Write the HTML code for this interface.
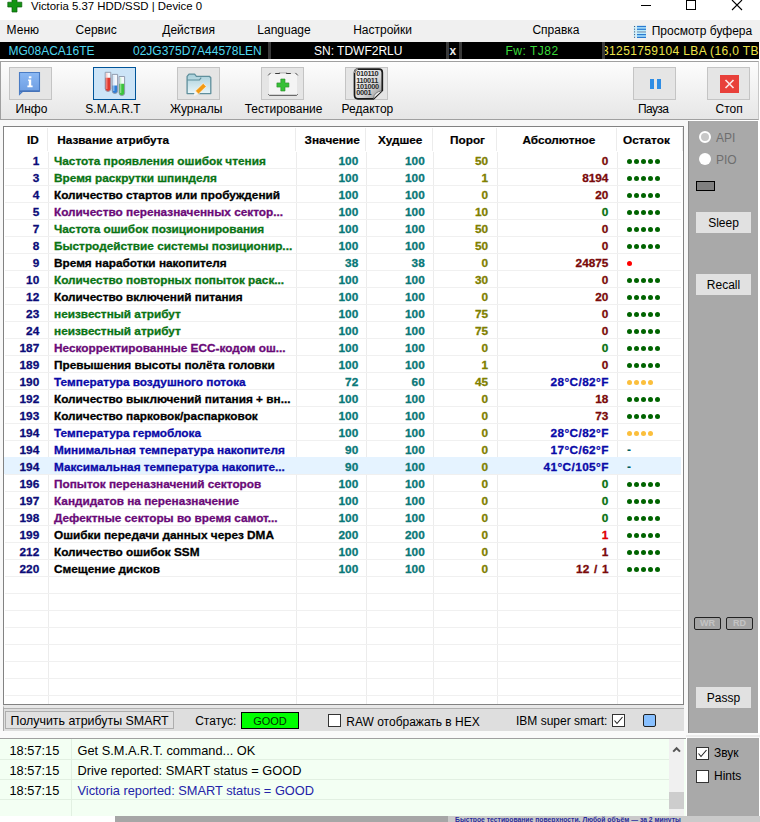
<!DOCTYPE html>
<html><head><meta charset="utf-8">
<style>
*{margin:0;padding:0;box-sizing:border-box}
html,body{width:760px;height:822px;overflow:hidden;background:#fff;font-family:"Liberation Sans",sans-serif;font-size:12px;color:#000;position:relative}
.a{position:absolute}
.t{position:absolute;white-space:nowrap;line-height:14px}
/* title */
#title{left:0;top:0;width:760px;height:20px;background:#fff}
/* menu */
#menu{left:0;top:20px;width:760px;height:22px;background:#f0f0f0}
#menu .t{top:3px}
/* black bar */
#bbar{left:0;top:42px;width:759px;height:17px;background:#000}
#bbar .t{top:2px;font-size:12px}
.sep{position:absolute;top:0;width:3px;height:17px;background:#3a3a3a}
/* toolbar */
#tbar{left:0;top:61px;width:759px;height:59px;background:linear-gradient(#fdfdfd,#e6e6e6);border:1px solid #a0a0a0;border-right-color:#c8c8c8}
.btn{position:absolute;top:67px;width:43px;height:33px;background:#e5e5e5;border:1px solid #c4c4c4}
.btn.sel{background:#cce4f7;border:1px solid #005499}
.blab{position:absolute;top:102px;white-space:nowrap;line-height:14px}
/* table */
#tbl{left:3px;top:126px;width:681px;height:579px;background:#fff;border:1px solid #828282;overflow:hidden}
.row{position:absolute;left:1px;width:677px;height:17px}
.row.hl{background:#e5f3ff}
.hl1{position:absolute;left:2px;width:676px;height:1px;background:#f0f0f0}
.vl{position:absolute;top:25px;width:1px;height:553px;background:#ececec}
.vh{position:absolute;top:1px;width:1px;height:23px;background:#ececec}
.c{position:absolute;top:3px;line-height:14px;white-space:nowrap;font-weight:bold;font-size:11.8px;-webkit-text-stroke:0.3px currentColor}
.id{right:641.8px;color:#0c0c78}
.nm{left:50px}
.temp{letter-spacing:0.4px;margin-right:-0.4px}
.v1{right:322.8px;color:#0a7878}
.v2{right:256.3px;color:#0a7878}
.v3{right:193px;color:#808000}
.ab{right:72.6px}
.dots{position:absolute;left:623px;top:0;height:17px;width:50px}
.dots i{position:absolute;top:7.5px;width:5px;height:5px;border-radius:50%}
.dash{position:absolute;left:0;top:3px;font-weight:bold;color:#006060;line-height:14px}
.hd{position:absolute;top:5.6px;line-height:14px;font-weight:bold;font-size:11.8px;white-space:nowrap;-webkit-text-stroke:0.2px #000}
/* right panel */
#rp{left:688px;top:121px;width:70px;height:612px;background:#a9a9a9;border-left:1px solid #8c8c8c}
.gbtn{position:absolute;background:#e1e1e1;text-align:center;line-height:22px;font-size:12px}
/* status */
#stat{left:3px;top:705px;width:681px;height:26px;background:#dedede;border-top:3px solid #e8e8e8;border-left:1px solid #a8a8a8}
/* log */
#log{left:0;top:738px;width:686px;height:78px;background:#f3fff3;border-top:1px solid #a0a0a0}
.lr{position:absolute;left:0;width:669px;height:1px;background:#e2f0e2}
.lt{position:absolute;white-space:nowrap;font-size:12.8px;line-height:15px}
</style></head><body>
<div id="title" class="a">
  <svg class="a" style="left:7px;top:0" width="16" height="13"><path d="M5 -1H10V2.2H14.8V7H10V12H5V7H0.8V2.2H5Z" fill="#129412" stroke="#0a5a0a" stroke-width="0.7"/></svg>
  <div class="t" style="left:31px;top:-1.3px;font-size:11.4px;color:#000">Victoria 5.37 HDD/SSD | Device 0</div>
  <div class="a" style="left:641px;top:5px;width:10px;height:1px;background:#000"></div>
  <div class="a" style="left:686px;top:0;width:10px;height:10px;border:1px solid #000"></div>
  <svg class="a" style="left:731px;top:-1px" width="12" height="12"><path d="M1 1L11 11M11 1L1 11" stroke="#000" stroke-width="1.1"/></svg>
</div>
<div id="menu" class="a">
  <span class="t" style="left:6.6px">Меню</span>
  <span class="t" style="left:75.6px">Сервис</span>
  <span class="t" style="left:162.3px">Действия</span>
  <span class="t" style="left:257.3px">Language</span>
  <span class="t" style="left:353.2px">Настройки</span>
  <span class="t" style="left:532.4px">Справка</span>
  <svg class="a" style="left:633px;top:5px" width="14" height="13" viewBox="0 0 14 13">
  <rect x="0.8" y="0.8" width="1.6" height="11.6" fill="#b8ecff"/>
  <rect x="3.5" y="0.8" width="9.5" height="11.6" fill="#b8ecff"/>
  <g fill="#2a7ad0"><rect x="4" y="0.9" width="9" height="1.3"/><rect x="4" y="3.6" width="9" height="1.3"/><rect x="4" y="9" width="9" height="1.3"/><rect x="4" y="11.7" width="9" height="1.3"/></g>
  <rect x="4" y="6.3" width="9" height="1.3" fill="#8aa0b8"/>
  <g fill="#3a4a6a"><rect x="1.1" y="1" width="1" height="1"/><rect x="1.1" y="3.7" width="1" height="1"/><rect x="1.1" y="6.4" width="1" height="1"/><rect x="1.1" y="9.1" width="1" height="1"/><rect x="1.1" y="11.8" width="1" height="1"/></g>
</svg>
  <span class="t" style="left:651.7px;top:4px">Просмотр буфера</span>
</div>
<div id="bbar" class="a">
  <span class="t" style="left:8.5px;color:#50d8f0">MG08ACA16TE</span>
  <span class="t" style="left:133px;color:#50d8f0">02JG375D7A44578LEN</span>
  <div class="sep" style="left:268px"></div>
  <span class="t" style="left:314px;color:#fff">SN: TDWF2RLU</span>
  <div class="sep" style="left:446px"></div>
  <span class="t" style="left:449.5px;color:#e8e8e8;font-weight:bold">x</span>
  <div class="sep" style="left:459px"></div>
  <span class="t" style="left:505.5px;color:#3ada3a;letter-spacing:0.5px">Fw: TJ82</span>
  <div class="sep" style="left:602px"></div>
  <div class="a" style="left:605px;top:0;width:154px;height:17px;overflow:hidden"><span class="t" style="left:-3px;top:2px;color:#ece44a;letter-spacing:0.375px">31251759104 LBA (16,0 TB)</span></div>
</div>
<div id="tbar" class="a"></div>
<div class="btn" style="left:9px"></div>
<div class="btn sel" style="left:93px"></div>
<div class="btn" style="left:177px"></div>
<div class="btn" style="left:261px"></div>
<div class="btn" style="left:345px"></div>
<div class="btn" style="left:633px"></div>
<div class="btn" style="left:707px"></div>

<svg class="a" style="left:18px;top:71px" width="24" height="25" viewBox="0 0 24 25">
  <defs><linearGradient id="ig" x1="0" y1="0" x2="0" y2="1"><stop offset="0" stop-color="#8ab8f4"/><stop offset="1" stop-color="#6a9ae0"/></linearGradient></defs>
  <path d="M1.5 1.5H21.5V20.2H5L1.5 23.5Z" fill="url(#ig)" stroke="#4a7cc4" stroke-width="1.1"/>
  <path d="M2 20.2H21.5" stroke="#4572b8" stroke-width="1.6"/>
  <rect x="10.8" y="5.3" width="2.6" height="2" fill="#fff"/>
  <path d="M10 8.6H13.2V14.6H14.6V16.2H9.4V14.6H10.8V9.8H10Z" fill="#fff"/>
</svg>
<svg class="a" style="left:103px;top:71px" width="24" height="26" viewBox="0 0 24 26"><path d="M2.2 1.3H7.8V17.599999999999998A2.8 2.8 0 0 1 2.2 17.599999999999998Z" fill="#f6f8fc"/><path d="M2.2 6.7H7.8V17.599999999999998A2.8 2.8 0 0 1 2.2 17.599999999999998Z" fill="#e03a30"/><path d="M3.8000000000000003 2.3V17.9" stroke="#ffb0a8" stroke-width="1.2" opacity="0.7"/><path d="M2.2 1.3H7.8V17.599999999999998A2.8 2.8 0 0 1 2.2 17.599999999999998Z" fill="none" stroke="#8a94a8" stroke-width="0.9"/><path d="M9.2 3.4H14.6V19.8A2.7 2.7 0 0 1 9.2 19.8Z" fill="#f6f8fc"/><path d="M9.2 14.5H14.6V19.8A2.7 2.7 0 0 1 9.2 19.8Z" fill="#2f7fd8"/><path d="M10.799999999999999 4.4V20.0" stroke="#c0e0ff" stroke-width="1.2" opacity="0.7"/><path d="M9.2 3.4H14.6V19.8A2.7 2.7 0 0 1 9.2 19.8Z" fill="none" stroke="#8a94a8" stroke-width="0.9"/><path d="M16.1 5.5H21.6V21.85A2.75 2.75 0 0 1 16.1 21.85Z" fill="#f6f8fc"/><path d="M16.1 12.7H21.6V21.85A2.75 2.75 0 0 1 16.1 21.85Z" fill="#3cc43c"/><path d="M17.700000000000003 6.5V22.1" stroke="#b8f0b8" stroke-width="1.2" opacity="0.7"/><path d="M16.1 5.5H21.6V21.85A2.75 2.75 0 0 1 16.1 21.85Z" fill="none" stroke="#8a94a8" stroke-width="0.9"/></svg>
<svg class="a" style="left:186px;top:73px" width="26" height="24" viewBox="0 0 26 24">
  <defs><linearGradient id="fg" x1="0" y1="0" x2="0" y2="1"><stop offset="0" stop-color="#a6cfd9"/><stop offset="0.5" stop-color="#c9e2ea"/><stop offset="1" stop-color="#e9f6f9"/></linearGradient></defs>
  <path d="M1.1 20.6V3.4L3 1.2H8.6L10.4 3.3H23.3L24.8 4.8V20.6Z" fill="url(#fg)" stroke="#5f8f9c" stroke-width="1.3" stroke-linejoin="round"/>
  <path d="M1.1 7H13.4L15.2 4.6" fill="none" stroke="#5f8f9c" stroke-width="1.2"/>
  <path d="M8.2 22.3L9.3 18L12.4 21Z" fill="#f4f4f4" stroke="#fff" stroke-width="0.6"/>
  <path d="M12.5 21.1L9.4 17.9L17.2 10.3L20.3 13.5Z" fill="#f39a12" stroke="#fff3e0" stroke-width="0.8"/>
</svg>
<svg class="a" style="left:267px;top:71px" width="32" height="26" viewBox="0 0 32 26">
  <rect x="2" y="3" width="28" height="21" fill="#f4f4f4"/>
  <path d="M1.2 4.4L3.6 1.9M28.4 1.9L30.8 4.4M1.3 23.3L2.3 24.3H29.7L30.7 23.3" fill="none" stroke="#4a4a4a" stroke-width="1"/>
  <path d="M8.2 2.5H12.2L12.8 1.8M19.2 1.8L19.8 2.5H23.8" fill="none" stroke="#3a3a3a" stroke-width="1.2"/>
  <path d="M12.8 1.8H19.2" stroke="#b8b8b8" stroke-width="1"/>
  <path d="M13.8 8H18V11.9H21.9V16.1H18V20H13.8V16.1H9.9V11.9H13.8Z" fill="#36c036" stroke="#2a8a2a" stroke-width="0.6"/>
</svg>
<svg class="a" style="left:353px;top:68px" width="31" height="32" viewBox="0 0 31 32">
  <defs><linearGradient id="dg" x1="0" y1="0" x2="1" y2="1"><stop offset="0" stop-color="#ffffff"/><stop offset="0.6" stop-color="#d6d6d6"/><stop offset="1" stop-color="#8a8a8a"/></linearGradient></defs>
  <path d="M5 1.2H26Q29.3 1.2 29.3 4.5V22.5L20.5 30.8H5Q1.5 30.8 1.5 27V5Q1.5 1.2 5 1.2Z" fill="url(#dg)" stroke="#1a1a1a" stroke-width="1.7"/>
  <path d="M1.5 5Q1.5 1.2 5 1.2" fill="none" stroke="#999" stroke-width="1.2"/>
  <path d="M20.5 30.5Q21 24 28.8 22.8" fill="#f0f0f0" stroke="#666" stroke-width="0.8"/>
  <g font-family="Liberation Sans" font-size="7.4" font-weight="bold" fill="#2a2a2a" letter-spacing="-0.35">
  <text x="3.2" y="8.2">010110</text>
  <text x="3.2" y="14.6">110011</text>
  <text x="3.2" y="21">101000</text>
  <text x="3.2" y="27.4">0001</text></g>
</svg>
<div class="a" style="left:650px;top:79px;width:4px;height:10px;background:#2f8de4"></div>
<div class="a" style="left:657px;top:79px;width:4px;height:10px;background:#2f8de4"></div>
<svg class="a" style="left:720px;top:75px" width="19" height="18" viewBox="0 0 19 18"><rect width="19" height="18" fill="#e8403a"/><path d="M5.5 5L13.5 13M13.5 5L5.5 13" stroke="#fbe4e4" stroke-width="1.7"/></svg>
<span class="blab" style="left:15.5px">Инфо</span>
<span class="blab" style="left:85.3px">S.M.A.R.T</span>
<span class="blab" style="left:170px">Журналы</span>
<span class="blab" style="left:244.7px">Тестирование</span>
<span class="blab" style="left:341.6px">Редактор</span>
<span class="blab" style="left:638px;letter-spacing:-0.6px">Пауза</span>
<span class="blab" style="left:715.5px">Стоп</span>
<div class="a" style="left:0;top:120px;width:688px;height:6px;background:#f8f8f8"></div>
<div class="a" style="left:0;top:126px;width:3px;height:612px;background:#f8f8f8"></div>
<div class="a" style="left:684px;top:120px;width:4px;height:618px;background:#f8f8f8"></div>
<div id="tbl" class="a">
  <div class="vh" style="left:43px"></div><div class="vh" style="left:291px"></div><div class="vh" style="left:361px"></div><div class="vh" style="left:428px"></div><div class="vh" style="left:492px"></div><div class="vh" style="left:612px"></div><div class="vh" style="left:678px"></div>
  <div class="vl" style="left:44px"></div><div class="vl" style="left:292px"></div><div class="vl" style="left:362px"></div><div class="vl" style="left:429px"></div><div class="vl" style="left:493px"></div><div class="vl" style="left:613px"></div>
  <span class="hd" style="right:644.3px">ID</span>
  <span class="hd" style="left:53.2px">Название атрибута</span>
  <span class="hd" style="left:300.6px">Значение</span>
  <span class="hd" style="left:374px">Худшее</span>
  <span class="hd" style="left:446px">Порог</span>
  <span class="hd" style="left:518.4px">Абсолютное</span>
  <span class="hd" style="left:619px">Остаток</span>
</div>
<div class="a" style="left:3px;top:0;width:681px;height:705px;overflow:hidden"><div class="hl1" style="top:168px"></div><div class="hl1" style="top:185px"></div><div class="hl1" style="top:202px"></div><div class="hl1" style="top:219px"></div><div class="hl1" style="top:236px"></div><div class="hl1" style="top:253px"></div><div class="hl1" style="top:270px"></div><div class="hl1" style="top:287px"></div><div class="hl1" style="top:304px"></div><div class="hl1" style="top:321px"></div><div class="hl1" style="top:338px"></div><div class="hl1" style="top:355px"></div><div class="hl1" style="top:372px"></div><div class="hl1" style="top:389px"></div><div class="hl1" style="top:406px"></div><div class="hl1" style="top:423px"></div><div class="hl1" style="top:440px"></div><div class="hl1" style="top:457px"></div><div class="hl1" style="top:474px"></div><div class="hl1" style="top:491px"></div><div class="hl1" style="top:508px"></div><div class="hl1" style="top:525px"></div><div class="hl1" style="top:542px"></div><div class="hl1" style="top:559px"></div><div class="hl1" style="top:576px"></div><div class="hl1" style="top:593px"></div><div class="hl1" style="top:610px"></div><div class="hl1" style="top:627px"></div><div class="hl1" style="top:644px"></div><div class="hl1" style="top:661px"></div><div class="hl1" style="top:678px"></div><div class="hl1" style="top:695px"></div></div>
<div class="a" style="left:3px;top:0;width:680px;height:705px"><div class="row" style="top:151px">
<span class="c id">1</span><span class="c nm" style="color:#0a7414">Частота проявления ошибок чтения</span><span class="c v1">100</span><span class="c v2">100</span><span class="c v3">50</span><span class="c ab" style="color:#7a0a0a">0</span><span class="dots"><i style="left:0.0px;background:#006400"></i><i style="left:6.9px;background:#006400"></i><i style="left:13.8px;background:#006400"></i><i style="left:20.7px;background:#006400"></i><i style="left:27.6px;background:#006400"></i></span></div><div class="row" style="top:168px">
<span class="c id">3</span><span class="c nm" style="color:#0a7414">Время раскрутки шпинделя</span><span class="c v1">100</span><span class="c v2">100</span><span class="c v3">1</span><span class="c ab" style="color:#7a0a0a">8194</span><span class="dots"><i style="left:0.0px;background:#006400"></i><i style="left:6.9px;background:#006400"></i><i style="left:13.8px;background:#006400"></i><i style="left:20.7px;background:#006400"></i><i style="left:27.6px;background:#006400"></i></span></div><div class="row" style="top:185px">
<span class="c id">4</span><span class="c nm" style="color:#000000">Количество стартов или пробуждений</span><span class="c v1">100</span><span class="c v2">100</span><span class="c v3">0</span><span class="c ab" style="color:#7a0a0a">20</span><span class="dots"><i style="left:0.0px;background:#006400"></i><i style="left:6.9px;background:#006400"></i><i style="left:13.8px;background:#006400"></i><i style="left:20.7px;background:#006400"></i><i style="left:27.6px;background:#006400"></i></span></div><div class="row" style="top:202px">
<span class="c id">5</span><span class="c nm" style="color:#6a0a78">Количество переназначенных сектор...</span><span class="c v1">100</span><span class="c v2">100</span><span class="c v3">10</span><span class="c ab" style="color:#087010">0</span><span class="dots"><i style="left:0.0px;background:#006400"></i><i style="left:6.9px;background:#006400"></i><i style="left:13.8px;background:#006400"></i><i style="left:20.7px;background:#006400"></i><i style="left:27.6px;background:#006400"></i></span></div><div class="row" style="top:219px">
<span class="c id">7</span><span class="c nm" style="color:#0a7414">Частота ошибок позиционирования</span><span class="c v1">100</span><span class="c v2">100</span><span class="c v3">50</span><span class="c ab" style="color:#7a0a0a">0</span><span class="dots"><i style="left:0.0px;background:#006400"></i><i style="left:6.9px;background:#006400"></i><i style="left:13.8px;background:#006400"></i><i style="left:20.7px;background:#006400"></i><i style="left:27.6px;background:#006400"></i></span></div><div class="row" style="top:236px">
<span class="c id">8</span><span class="c nm" style="color:#0a7414">Быстродействие системы позиционир...</span><span class="c v1">100</span><span class="c v2">100</span><span class="c v3">50</span><span class="c ab" style="color:#7a0a0a">0</span><span class="dots"><i style="left:0.0px;background:#006400"></i><i style="left:6.9px;background:#006400"></i><i style="left:13.8px;background:#006400"></i><i style="left:20.7px;background:#006400"></i><i style="left:27.6px;background:#006400"></i></span></div><div class="row" style="top:253px">
<span class="c id">9</span><span class="c nm" style="color:#000000">Время наработки накопителя</span><span class="c v1">38</span><span class="c v2">38</span><span class="c v3">0</span><span class="c ab" style="color:#7a0a0a">24875</span><span class="dots"><i style="left:0.0px;background:#ff0000"></i></span></div><div class="row" style="top:270px">
<span class="c id">10</span><span class="c nm" style="color:#0a7414">Количество повторных попыток раск...</span><span class="c v1">100</span><span class="c v2">100</span><span class="c v3">30</span><span class="c ab" style="color:#7a0a0a">0</span><span class="dots"><i style="left:0.0px;background:#006400"></i><i style="left:6.9px;background:#006400"></i><i style="left:13.8px;background:#006400"></i><i style="left:20.7px;background:#006400"></i><i style="left:27.6px;background:#006400"></i></span></div><div class="row" style="top:287px">
<span class="c id">12</span><span class="c nm" style="color:#000000">Количество включений питания</span><span class="c v1">100</span><span class="c v2">100</span><span class="c v3">0</span><span class="c ab" style="color:#7a0a0a">20</span><span class="dots"><i style="left:0.0px;background:#006400"></i><i style="left:6.9px;background:#006400"></i><i style="left:13.8px;background:#006400"></i><i style="left:20.7px;background:#006400"></i><i style="left:27.6px;background:#006400"></i></span></div><div class="row" style="top:304px">
<span class="c id">23</span><span class="c nm" style="color:#0a7414">неизвестный атрибут</span><span class="c v1">100</span><span class="c v2">100</span><span class="c v3">75</span><span class="c ab" style="color:#7a0a0a">0</span><span class="dots"><i style="left:0.0px;background:#006400"></i><i style="left:6.9px;background:#006400"></i><i style="left:13.8px;background:#006400"></i><i style="left:20.7px;background:#006400"></i><i style="left:27.6px;background:#006400"></i></span></div><div class="row" style="top:321px">
<span class="c id">24</span><span class="c nm" style="color:#0a7414">неизвестный атрибут</span><span class="c v1">100</span><span class="c v2">100</span><span class="c v3">75</span><span class="c ab" style="color:#7a0a0a">0</span><span class="dots"><i style="left:0.0px;background:#006400"></i><i style="left:6.9px;background:#006400"></i><i style="left:13.8px;background:#006400"></i><i style="left:20.7px;background:#006400"></i><i style="left:27.6px;background:#006400"></i></span></div><div class="row" style="top:338px">
<span class="c id">187</span><span class="c nm" style="color:#6a0a78">Нескорректированные ECC-кодом ош...</span><span class="c v1">100</span><span class="c v2">100</span><span class="c v3">0</span><span class="c ab" style="color:#087010">0</span><span class="dots"><i style="left:0.0px;background:#006400"></i><i style="left:6.9px;background:#006400"></i><i style="left:13.8px;background:#006400"></i><i style="left:20.7px;background:#006400"></i><i style="left:27.6px;background:#006400"></i></span></div><div class="row" style="top:355px">
<span class="c id">189</span><span class="c nm" style="color:#000000">Превышения высоты полёта головки</span><span class="c v1">100</span><span class="c v2">100</span><span class="c v3">1</span><span class="c ab" style="color:#7a0a0a">0</span><span class="dots"><i style="left:0.0px;background:#006400"></i><i style="left:6.9px;background:#006400"></i><i style="left:13.8px;background:#006400"></i><i style="left:20.7px;background:#006400"></i><i style="left:27.6px;background:#006400"></i></span></div><div class="row" style="top:372px">
<span class="c id">190</span><span class="c nm" style="color:#0a0aa8">Температура воздушного потока</span><span class="c v1">72</span><span class="c v2">60</span><span class="c v3">45</span><span class="c ab temp" style="color:#0a0aa8">28°C/82°F</span><span class="dots"><i style="left:0.0px;background:#fbbf3c"></i><i style="left:6.9px;background:#fbbf3c"></i><i style="left:13.8px;background:#fbbf3c"></i><i style="left:20.7px;background:#fbbf3c"></i></span></div><div class="row" style="top:389px">
<span class="c id">192</span><span class="c nm" style="color:#000000">Количество выключений питания + вн...</span><span class="c v1">100</span><span class="c v2">100</span><span class="c v3">0</span><span class="c ab" style="color:#7a0a0a">18</span><span class="dots"><i style="left:0.0px;background:#006400"></i><i style="left:6.9px;background:#006400"></i><i style="left:13.8px;background:#006400"></i><i style="left:20.7px;background:#006400"></i><i style="left:27.6px;background:#006400"></i></span></div><div class="row" style="top:406px">
<span class="c id">193</span><span class="c nm" style="color:#000000">Количество парковок/распарковок</span><span class="c v1">100</span><span class="c v2">100</span><span class="c v3">0</span><span class="c ab" style="color:#7a0a0a">73</span><span class="dots"><i style="left:0.0px;background:#006400"></i><i style="left:6.9px;background:#006400"></i><i style="left:13.8px;background:#006400"></i><i style="left:20.7px;background:#006400"></i><i style="left:27.6px;background:#006400"></i></span></div><div class="row" style="top:423px">
<span class="c id">194</span><span class="c nm" style="color:#0a0aa8">Температура гермоблока</span><span class="c v1">100</span><span class="c v2">100</span><span class="c v3">0</span><span class="c ab temp" style="color:#0a0aa8">28°C/82°F</span><span class="dots"><i style="left:0.0px;background:#fbbf3c"></i><i style="left:6.9px;background:#fbbf3c"></i><i style="left:13.8px;background:#fbbf3c"></i><i style="left:20.7px;background:#fbbf3c"></i></span></div><div class="row" style="top:440px">
<span class="c id">194</span><span class="c nm" style="color:#0a0aa8">Минимальная температура накопителя</span><span class="c v1">90</span><span class="c v2">100</span><span class="c v3">0</span><span class="c ab temp" style="color:#0a0aa8">17°C/62°F</span><span class="dots"><span class="dash">-</span></span></div><div class="row hl" style="top:457px">
<span class="c id">194</span><span class="c nm" style="color:#0a0aa8">Максимальная температура накопите...</span><span class="c v1">90</span><span class="c v2">100</span><span class="c v3">0</span><span class="c ab temp" style="color:#0a0aa8">41°C/105°F</span><span class="dots"><span class="dash">-</span></span></div><div class="row" style="top:474px">
<span class="c id">196</span><span class="c nm" style="color:#6a0a78">Попыток переназначений секторов</span><span class="c v1">100</span><span class="c v2">100</span><span class="c v3">0</span><span class="c ab" style="color:#087010">0</span><span class="dots"><i style="left:0.0px;background:#006400"></i><i style="left:6.9px;background:#006400"></i><i style="left:13.8px;background:#006400"></i><i style="left:20.7px;background:#006400"></i><i style="left:27.6px;background:#006400"></i></span></div><div class="row" style="top:491px">
<span class="c id">197</span><span class="c nm" style="color:#6a0a78">Кандидатов на переназначение</span><span class="c v1">100</span><span class="c v2">100</span><span class="c v3">0</span><span class="c ab" style="color:#087010">0</span><span class="dots"><i style="left:0.0px;background:#006400"></i><i style="left:6.9px;background:#006400"></i><i style="left:13.8px;background:#006400"></i><i style="left:20.7px;background:#006400"></i><i style="left:27.6px;background:#006400"></i></span></div><div class="row" style="top:508px">
<span class="c id">198</span><span class="c nm" style="color:#6a0a78">Дефектные секторы во время самот...</span><span class="c v1">100</span><span class="c v2">100</span><span class="c v3">0</span><span class="c ab" style="color:#087010">0</span><span class="dots"><i style="left:0.0px;background:#006400"></i><i style="left:6.9px;background:#006400"></i><i style="left:13.8px;background:#006400"></i><i style="left:20.7px;background:#006400"></i><i style="left:27.6px;background:#006400"></i></span></div><div class="row" style="top:525px">
<span class="c id">199</span><span class="c nm" style="color:#000000">Ошибки передачи данных через DMA</span><span class="c v1">200</span><span class="c v2">200</span><span class="c v3">0</span><span class="c ab" style="color:#e00000">1</span><span class="dots"><i style="left:0.0px;background:#006400"></i><i style="left:6.9px;background:#006400"></i><i style="left:13.8px;background:#006400"></i><i style="left:20.7px;background:#006400"></i><i style="left:27.6px;background:#006400"></i></span></div><div class="row" style="top:542px">
<span class="c id">212</span><span class="c nm" style="color:#000000">Количество ошибок SSM</span><span class="c v1">100</span><span class="c v2">100</span><span class="c v3">0</span><span class="c ab" style="color:#7a0a0a">1</span><span class="dots"><i style="left:0.0px;background:#006400"></i><i style="left:6.9px;background:#006400"></i><i style="left:13.8px;background:#006400"></i><i style="left:20.7px;background:#006400"></i><i style="left:27.6px;background:#006400"></i></span></div><div class="row" style="top:559px">
<span class="c id">220</span><span class="c nm" style="color:#000000">Смещение дисков</span><span class="c v1">100</span><span class="c v2">100</span><span class="c v3">0</span><span class="c ab" style="color:#7a0a0a;word-spacing:1.5px;margin-right:-0.2px">12 / 1</span><span class="dots"><i style="left:0.0px;background:#006400"></i><i style="left:6.9px;background:#006400"></i><i style="left:13.8px;background:#006400"></i><i style="left:20.7px;background:#006400"></i><i style="left:27.6px;background:#006400"></i></span></div></div>
<div id="rp" class="a">
  <div class="a" style="left:10px;top:10px;width:12px;height:12px;border-radius:50%;background:#c8c8c8;border:2px solid #fff"></div>
  <span class="t" style="left:27px;top:10px;color:#6e6e6e">API</span>
  <div class="a" style="left:10px;top:32px;width:12px;height:12px;border-radius:50%;background:#fff"></div>
  <span class="t" style="left:27px;top:32px;color:#6e6e6e">PIO</span>
  <div class="a" style="left:7px;top:60px;width:19px;height:10px;background:#808080;border:1px solid #000"></div>
  <div class="gbtn" style="left:7px;top:91px;width:55px;height:21px">Sleep</div>
  <div class="gbtn" style="left:7px;top:153px;width:55px;height:21px">Recall</div>
  <div class="a" style="left:5px;top:496px;width:27px;height:13px;border:1px solid #222;border-radius:2px;background:#a4a4a4;color:#c4c4c4;font-weight:bold;font-size:9px;line-height:11px;text-align:center">WR</div>
  <div class="a" style="left:37px;top:496px;width:27px;height:13px;border:1px solid #222;border-radius:2px;background:#a4a4a4;color:#c4c4c4;font-weight:bold;font-size:9px;line-height:11px;text-align:center">RD</div>
  <div class="gbtn" style="left:7px;top:566px;width:55px;height:21px">Passp</div>
</div>
<div id="stat" class="a">
  <div class="a" style="left:0;top:0;width:680px;height:1px;background:#b0b0b0"></div>
  <div class="a" style="left:1.3px;top:3.3px;width:169px;height:18px;background:#e1e1e1;border:1px solid #adadad"></div>
  <span class="t" style="left:6.5px;top:5.6px;font-size:12.4px">Получить атрибуты SMART</span>
  <span class="t" style="left:191.2px;top:6.1px">Статус:</span>
  <div class="a" style="left:237px;top:4px;width:58px;height:17px;background:#00ff00;border:1px solid #000;text-align:center;line-height:16px;font-size:11px;color:#003000">GOOD</div>
  <div class="a" style="left:324px;top:6.3px;width:13px;height:13px;background:#fff;border:1px solid #333"></div>
  <span class="t" style="left:342.3px;top:6.8px">RAW отображать в HEX</span>
  <span class="t" style="left:512px;top:6.1px">IBM super smart:</span>
  <svg class="a" style="left:608px;top:6.3px" width="13" height="13"><rect x="0.5" y="0.5" width="12" height="12" fill="#fff" stroke="#333"/><path d="M2.5 6.5L5 9.5L10.5 3" fill="none" stroke="#222" stroke-width="1.1"/></svg>
  <div class="a" style="left:639.3px;top:6px;width:13px;height:13px;background:#88c0ff;border:1px solid #222;border-radius:2px"></div>
</div>
<div id="log" class="a">
  <div class="lr" style="top:20px"></div><div class="lr" style="top:40px"></div><div class="lr" style="top:60px"></div>
  <div class="a" style="left:71px;top:0;width:1px;height:77px;background:#e2f0e2"></div>
  <span class="lt" style="left:9.5px;top:4px">18:57:15</span><span class="lt" style="left:77.5px;top:4px">Get S.M.A.R.T. command... OK</span>
  <span class="lt" style="left:9.5px;top:24px">18:57:15</span><span class="lt" style="left:77.5px;top:24px">Drive reported: SMART status = GOOD</span>
  <span class="lt" style="left:9.5px;top:44px">18:57:15</span><span class="lt" style="left:77.5px;top:44px;color:#2424a8">Victoria reported: SMART status = GOOD</span>
  <div class="a" style="left:669px;top:0;width:15px;height:77px;background:#f0f0f0"></div>
  <div class="a" style="left:669px;top:53px;width:15px;height:17px;background:#cdcdcd"></div>
  <svg class="a" style="left:672px;top:7px" width="10" height="7"><path d="M1.2 5.6L4.6 2.2L8 5.6" fill="none" stroke="#555" stroke-width="2"/></svg>
</div>
<div class="a" style="left:0;top:731px;width:686px;height:7px;background:#fafafa"></div><div class="a" style="left:686px;top:733px;width:74px;height:5px;background:#fafafa"></div><div class="a" style="left:686px;top:734.5px;width:74px;height:2px;background:#ececec"></div>
<div id="bp" class="a" style="left:687px;top:738px;width:71.5px;height:78px;background:#a9a9a9">
  <svg class="a" style="left:9px;top:9px" width="13" height="13"><rect x="0.5" y="0.5" width="12" height="12" fill="#fff" stroke="#333"/><path d="M2.5 6.5L5 9.5L10.5 3" fill="none" stroke="#222" stroke-width="1.1"/></svg>
  <span class="t" style="left:27px;top:8px">Звук</span>
  <div class="a" style="left:9px;top:32px;width:13px;height:13px;background:#fff;border:1px solid #333"></div>
  <span class="t" style="left:27px;top:31px">Hints</span>
</div>
<div class="a" style="left:115px;top:816px;width:333px;height:6px;background:#a6a6a6"></div>
<div class="a" style="left:448px;top:816px;width:312px;height:6px;background:#cacaca;overflow:hidden"><span class="t" style="left:7px;top:-2px;font-size:6.8px;font-weight:bold;color:#2a2a9a;line-height:12px">Быстрое тестирование поверхности. Любой объём — за 2 минуты</span></div>
</body></html>
